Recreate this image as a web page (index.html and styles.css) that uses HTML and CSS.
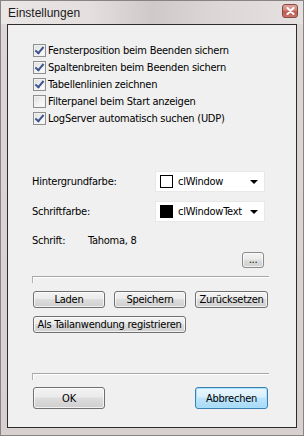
FILE: index.html
```html
<!DOCTYPE html>
<html lang="de">
<head>
<meta charset="utf-8">
<title>Einstellungen</title>
<link rel="stylesheet" href="styles.css">
</head>
<body>
<div class="window">
  <div class="titlebar">
    <span class="title">Einstellungen</span>
    <span class="close"><svg width="9" height="8" viewBox="0 0 9 8"><path d="M1.5 1 L7.5 7 M7.5 1 L1.5 7" stroke="#fff" stroke-width="2" stroke-linecap="round"/></svg></span>
  </div>
  <div class="client">
    <div class="content">
      <ul class="checks">
        <li class="check-row"><span class="box on"></span>Fensterposition beim Beenden sichern</li>
        <li class="check-row"><span class="box on"></span>Spaltenbreiten beim Beenden sichern</li>
        <li class="check-row"><span class="box on"></span>Tabellenlinien zeichnen</li>
        <li class="check-row"><span class="box"></span>Filterpanel beim Start anzeigen</li>
        <li class="check-row"><span class="box on"></span>LogServer automatisch suchen (UDP)</li>
      </ul>

      <div class="field-row first">
        <span class="field-label">Hintergrundfarbe:</span>
        <div class="combo">
          <span class="swatch white"></span>
          <span class="combo-text">clWindow</span>
          <span class="arrow"></span>
        </div>
      </div>
      <div class="field-row">
        <span class="field-label">Schriftfarbe:</span>
        <div class="combo">
          <span class="swatch black"></span>
          <span class="combo-text">clWindowText</span>
          <span class="arrow"></span>
        </div>
      </div>

      <div class="font-row">
        <span class="font-label">Schrift:</span>
        <span>Tahoma, 8</span>
      </div>
      <div class="dots-row">
        <button class="btn dots">...</button>
      </div>

      <div class="bevel"></div>

      <div class="btn-row">
        <button class="btn small w72">Laden</button>
        <button class="btn small w72">Speichern</button>
        <button class="btn small w73">Zurücksetzen</button>
      </div>
      <div class="btn-row single">
        <button class="btn small wide">Als Tailanwendung registrieren</button>
      </div>

      <div class="bevel second"></div>

      <div class="btn-row footer">
        <button class="btn big w72">OK</button>
        <button class="btn big w73 default">Abbrechen</button>
      </div>
    </div>
  </div>
</div>
</body>
</html>
```
FILE: styles.css
```css
* { box-sizing: border-box; }
html, body { margin: 0; padding: 0; }
body {
  width: 304px;
  height: 436px;
  overflow: hidden;
  background: #d8d2d2;
  font-family: "DejaVu Sans Condensed", "Liberation Sans", sans-serif;
  font-size: 11px;
  letter-spacing: -0.25px;
  color: #000;
}
.window {
  width: 304px;
  height: 436px;
  border: 1px solid #8a8383;
  background: linear-gradient(to bottom, #e6e1e1 0, #dcd6d6 30px, #d6d0d0 100%);
  display: flex;
  flex-direction: column;
}
.titlebar {
  height: 23px;
  display: flex;
  align-items: center;
  padding: 0 5px 0 7px;
  background: linear-gradient(to right, #ebe7e7 0, #e4dede 30%, #cfc9c9 50%, #dcd6d6 70%, #e6e1e1 100%);
}
.title {
  flex: 1;
  font-family: "Liberation Sans", sans-serif;
  font-size: 12px;
  letter-spacing: 0;
  color: #1a1a1a;
  padding-top: 1px;
}
.close {
  width: 16px;
  height: 14px;
  margin-top: -4px;
  border: 1px solid #8c4a44;
  border-radius: 3px;
  background: linear-gradient(to bottom, #dfa59d 0, #cf8379 45%, #bd5a4e 55%, #c8756a 100%);
  display: flex;
  align-items: center;
  justify-content: center;
}
.client {
  margin: 0 6px;
  height: 404px;
  border: 1px solid #2d2b2b;
  background: #f0f0f0;
}
.content {
  padding: 17px 0 0 24px;
  width: 260px;
}
.checks {
  list-style: none;
  margin: 0;
  padding: 0;
}
.check-row {
  height: 17px;
  display: flex;
  align-items: center;
  padding-left: 1px;
  white-space: nowrap;
}
.box {
  width: 13px;
  height: 13px;
  margin-right: 2px;
  border: 1px solid #8e8f8f;
  background: linear-gradient(135deg, #dcdcdc 0, #f4f4f4 60%, #fbfbfb 100%);
  box-shadow: inset 0 0 0 1px #f2f2f2;
  flex: none;
  position: relative;
}
.box.on::after {
  content: "";
  position: absolute;
  left: 3px;
  top: 0px;
  width: 3px;
  height: 7px;
  border: solid #3e5590;
  border-width: 0 2px 2px 0;
  transform: rotate(40deg);
  transform-origin: center;
}
.field-row {
  display: flex;
  align-items: center;
  height: 21px;
  margin-top: 9px;
}
.field-row.first { margin-top: 44px; }
.field-label { width: 123px; }
.combo {
  width: 110px;
  height: 21px;
  background: #fff;
  border: 1px solid #e8e8e8;
  display: flex;
  align-items: center;
  padding-left: 4px;
}
.swatch {
  width: 13px;
  height: 13px;
  border: 1px solid #000;
  margin-right: 5px;
  flex: none;
}
.swatch.white { background: #fff; }
.swatch.black { background: #000; }
.combo-text { flex: 1; }
.arrow {
  width: 0;
  height: 0;
  border-left: 4px solid transparent;
  border-right: 4px solid transparent;
  border-top: 4px solid #000;
  margin-right: 6px;
}
.font-row {
  display: flex;
  align-items: center;
  height: 14px;
  margin-top: 11px;
}
.font-label { width: 56px; }
.dots-row {
  display: flex;
  justify-content: flex-end;
  width: 232px;
  margin-top: 5px;
}
.btn {
  font-family: inherit;
  font-size: 11px;
  letter-spacing: -0.25px;
  color: #000;
  padding: 0;
  border: 1px solid #707070;
  border-radius: 3px;
  background: linear-gradient(to bottom, #f3f3f3 0, #ebebeb 45%, #dddddd 50%, #cfcfcf 100%);
  box-shadow: inset 0 0 0 1px rgba(255,255,255,0.7);
  display: flex;
  align-items: center;
  justify-content: center;
  white-space: nowrap;
}
.dots {
  width: 22px;
  height: 16px;
  line-height: 1;
  padding-bottom: 2px;
  border-color: #8a8a8a;
}
.bevel {
  width: 237px;
  height: 7px;
  margin-top: 8px;
  border-top: 1px solid #a6a6a6;
  border-left: 1px solid #b0b0b0;
  box-shadow: inset 1px 1px 0 #ffffff;
}
.bevel.second { margin-top: 40px; }
.btn-row {
  display: flex;
  gap: 9px;
  margin-top: 8px;
  padding-left: 1px;
}
.btn.small { height: 17px; }
.btn.big { height: 22px; }
.w72 { width: 72px; }
.w73 { width: 73px; }
.wide { width: 153px; }
.btn-row.footer {
  margin-top: 7px;
  gap: 90px;
}
.btn.default {
  border-color: #3c7fb1;
  background: linear-gradient(to bottom, #eaf6fd 0, #d9f0fc 45%, #bee6fd 50%, #a7d9f5 100%);
  box-shadow: inset 0 0 0 1px #a7e1fb;
}
```
